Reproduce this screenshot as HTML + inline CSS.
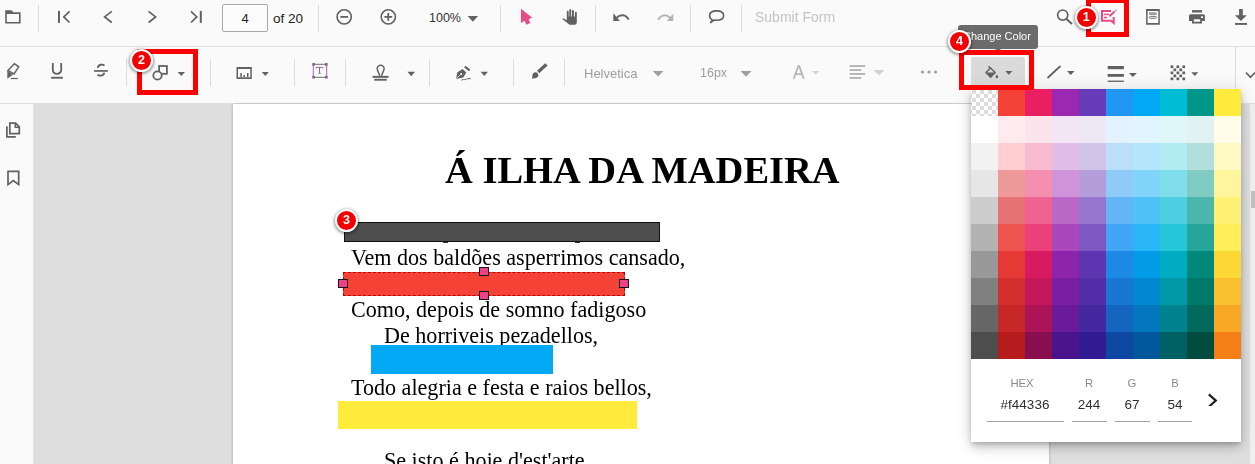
<!DOCTYPE html>
<html><head><meta charset="utf-8">
<style>
*{margin:0;padding:0;box-sizing:border-box}
html,body{width:1255px;height:464px;overflow:hidden;background:#dedede;font-family:"Liberation Sans",sans-serif}
.abs{position:absolute}
#tb1{left:0;top:0;width:1255px;height:47px;background:#fafafa;border-bottom:1px solid #e0e0e0}
#tb2{left:0;top:47px;width:1255px;height:57px;background:#fafafa;border-bottom:1px solid #e0e0e0}
.sep{position:absolute;width:1px;background:#dcdcdc}
#tb1 .sep{top:5px;height:27px}
#tb2 .sep{top:12px;height:27px}
.txt{position:absolute;white-space:pre;line-height:1}
#side{left:0;top:104px;width:34px;height:360px;background:#fafafa;border-right:1px solid #e0e0e0}
#page{left:233px;top:104px;width:816px;height:400px;background:#fff;box-shadow:-1px 0 2px rgba(0,0,0,0.15), 1px 0 2px rgba(0,0,0,0.15)}
.ser{font-family:"Liberation Serif",serif;color:#000;position:absolute;white-space:pre;line-height:1;will-change:transform}
.rbox{position:absolute;border:5px solid #fe0000}
.badge{position:absolute;width:23px;height:23px;border-radius:50%;background:#f50000;border:2.6px solid #fff;box-shadow:0 1px 3px 1px rgba(0,0,0,0.4);color:#fff;font-weight:700;font-size:12.5px;text-align:center;line-height:19.5px}
.handle{position:absolute;width:9.5px;height:9px;background:#ef4189;border:1.4px solid #151515}
#pop{left:971px;top:89px;width:270px;height:353px;background:#fff;box-shadow:0 3px 5px -1px rgba(0,0,0,.2),0 6px 10px 0 rgba(0,0,0,.14),0 1px 18px 0 rgba(0,0,0,.12)}
.lbl{will-change:transform;position:absolute;font-size:11.3px;color:#8a8a8a;line-height:1;white-space:pre;text-align:center}
.val{will-change:transform;position:absolute;font-size:13.5px;color:#2e2e2e;line-height:1;white-space:pre;text-align:center}
.ul{position:absolute;height:1px;background:#9e9e9e}
</style></head><body>

<div id="tb1" class="abs">
  <div class="sep" style="left:38px"></div>
  <div class="sep" style="left:318px"></div>
  <div class="sep" style="left:500px"></div>
  <div class="sep" style="left:595px"></div>
  <div class="sep" style="left:690px"></div>
  <div class="sep" style="left:741px"></div>
  <div class="abs" style="left:222px;top:4px;width:46px;height:28px;border:1px solid #a8a8a8;border-radius:2px;background:#fcfcfc"></div>
  <div class="txt" style="left:241.5px;top:12px;font-size:13px;color:#222">4</div>
  <div class="txt" style="left:273px;top:12px;font-size:13.5px;color:#222">of 20</div>
  <div class="txt" style="left:429px;top:12px;font-size:12.5px;color:#333">100%</div>
  <div class="txt" style="will-change:transform;left:755px;top:10px;font-size:14px;color:#c4c4c4">Submit Form</div>
</div>

<div id="tb2" class="abs">
  <div class="sep" style="left:126px"></div>
  <div class="sep" style="left:210px"></div>
  <div class="sep" style="left:294px"></div>
  <div class="sep" style="left:345px"></div>
  <div class="sep" style="left:429px"></div>
  <div class="sep" style="left:513px"></div>
  <div class="sep" style="left:564px"></div>
  <div class="sep" style="left:1235px;top:0;height:56px"></div>
  <div class="txt" style="will-change:transform;left:584px;top:20px;font-size:13px;color:#9e9e9e">Helvetica</div>
  <div class="txt" style="will-change:transform;left:700px;top:20px;font-size:12.5px;color:#9e9e9e">16px</div>
  <div class="abs" style="left:971px;top:10px;width:54px;height:38px;background:#dadada;border-radius:2px"></div>
</div>

<svg class="abs" style="left:0;top:0" width="1255" height="104" viewBox="0 0 1255 104">
 <g fill="#616161">
  <!-- folder -->
  <path fill-rule="evenodd" d="M5.2,10.2H11.4L13.4,12.2H20.6V23.6H5.2Z M6.8,14V22H19V14Z"/>
  <rect x="58" y="10.9" width="2" height="12"/>
  <rect x="199.8" y="10.9" width="2" height="12"/>
  <!-- zoom carets -->
  <path d="M467.7,16H478L472.85,21.7Z"/>
  <!-- pointer -->
  <path fill="#e94b86" d="M521,8.8L532,17.4L528.7,19.3L530.3,23L526.3,24.8L524.6,20.8L521,22.9Z"/>
  <!-- hand -->
  <path d="M566.8,11.8a0.95,0.95 0 0 1 1.9,0V16.5H569.3V10a0.95,0.95 0 0 1 1.9,0V16.5H572V10.9a0.95,0.95 0 0 1 1.9,0V16.5H574.9V12.8a0.95,0.95 0 0 1 1.9,0V22.5a2.3,2.3 0 0 1 -2.3,2.3H569.5L562.3,18.9L563.3,18.2L566.8,20.2Z"/>
  <!-- undo -->
  <path d="M613.3,13.3V21H619.8Z"/>
  <path fill="#b5b5b5" d="M673.3,13.5V21.1H666.8Z"/>
  <!-- download -->
  <path d="M1239.1,9H1242.8V15.2H1246.8L1240.95,20.9L1235,15.2H1239.1Z"/>
  <rect x="1235" y="23" width="12" height="1.9"/>
  <!-- print -->
  <rect x="1192" y="10.1" width="10" height="2.4"/>
  <path fill-rule="evenodd" d="M1190.5,14.2H1203.4A1.5,1.5 0 0 1 1204.9,15.7V20.9H1202V23.6H1192V20.9H1189V15.7A1.5,1.5 0 0 1 1190.5,14.2Z M1193.8,19.3V21.7H1200.2V19.3Z M1201.1,16.2V18.1H1203V16.2Z"/>
  <!-- organizer -->
  <path fill-rule="evenodd" d="M1146.1,9H1159.8V24.7H1146.1Z M1147.6,11V23H1158.3V11Z"/>
  <rect x="1149" y="12.3" width="7.8" height="2.7" rx="1" fill="#9a9a9a"/>
 </g>
 <g fill="none" stroke="#616161" stroke-width="1.7">
  <polyline points="69.5,11.3 63.8,16.9 69.5,22.5"/>
  <polyline points="111.8,11.3 104.6,16.9 111.8,22.5"/>
  <polyline points="148.6,11.3 155.6,16.9 148.6,22.5"/>
  <polyline points="191,11.3 196.8,16.9 191,22.5"/>
  <circle cx="344.2" cy="16.9" r="7.1" stroke-width="1.6"/>
  <line x1="340.3" y1="16.9" x2="348.1" y2="16.9" stroke-width="1.8"/>
  <circle cx="388.3" cy="16.9" r="7.1" stroke-width="1.6"/>
  <line x1="384.4" y1="16.9" x2="392.2" y2="16.9" stroke-width="1.8"/>
  <line x1="388.3" y1="13" x2="388.3" y2="20.8" stroke-width="1.8"/>
  <path d="M616.8,17.6C619.8,14.3 625.8,13.8 628.6,19.6" stroke-width="2"/>
  <path d="M670,17.8C667,14.5 661,14 658.2,19.8" stroke-width="2" stroke="#b5b5b5"/>
  <path d="M712.3,19.9C710.3,18.9 709.6,17.3 709.6,15.6C709.6,12.6 712.7,10.9 716.6,10.9C720.5,10.9 723.6,12.6 723.6,15.6C723.6,18.6 720.5,20.3 716.6,20.3C715.6,20.3 714.9,20.2 714,20.1L710.6,22.6Z" stroke-width="1.6" stroke-linejoin="round"/>
  <circle cx="1062.7" cy="15.1" r="5.1" stroke-width="1.7"/>
  <line x1="1066.4" y1="18.9" x2="1072" y2="23.9" stroke-width="2"/>
  <rect x="1149.5" y="16.4" width="6.9" height="1.9" rx="0.9" stroke-width="0.9"/>
  <!-- form designer -->
  <g stroke="#e94b86" stroke-width="2">
   <path d="M1111,11H1102V20.8H1111.3L1113.7,23V17.1"/>
   <line x1="1104" y1="14.4" x2="1109" y2="14.4" stroke-width="1.5"/>
   <line x1="1104" y1="17.5" x2="1107" y2="17.5" stroke-width="1.5"/>
   <line x1="1109.5" y1="16.3" x2="1114.6" y2="11.6"/>
   <line x1="1115.3" y1="10.9" x2="1116.3" y2="10" stroke-width="1.5"/>
  </g>
 </g>

 <!-- toolbar 2 -->
 <g fill="#616161">
  <!-- highlight -->
  <path d="M7.3,70.7V78.7L13,74.6Z"/>
  <rect x="10.8" y="77.9" width="7" height="1.2"/>
  <rect x="51.1" y="76.8" width="11.8" height="1.9"/>
  <rect x="94.1" y="70.1" width="13.7" height="1.7"/>
  <path d="M177.7,72.1H185L181.35,75.9Z"/>
  <path d="M261.8,72.1H268.8L265.3,75.9Z"/>
  <path d="M407.4,71.7H415L411.2,76.2Z"/>
  <path d="M480.5,71.7H488L484.25,75.9Z"/>
  <!-- measure -->
  <path fill-rule="evenodd" d="M236.5,67H251.8V78.9H236.5Z M238,69.1V77.3H250.3V69.1Z"/>
  <rect x="240.3" y="73" width="1.5" height="4"/>
  <rect x="243.4" y="75" width="1.5" height="2"/>
  <rect x="247" y="73" width="1.5" height="4"/>
  <!-- free text corners -->
  <rect x="312.3" y="63.1" width="2.6" height="2.6"/>
  <rect x="325" y="63.1" width="2.6" height="2.6"/>
  <rect x="312.3" y="75.9" width="2.6" height="2.6"/>
  <rect x="325" y="75.9" width="2.6" height="2.6"/>
  <!-- stamp -->
  <rect x="372.5" y="75.9" width="16.1" height="1.9"/>
  <rect x="374.3" y="78.8" width="12.4" height="1.9"/>
  <!-- signature nib -->
  <path d="M456,78.9L457.4,72.2L462.6,68.9L466.3,72.4L463.3,77.4Z"/>
  <!-- ink -->
  <path d="M537,70.8L545.2,63.3L547.6,65.6L539.3,73.2Z"/>
  <path d="M535.3,72.2C537.3,72.2 538.6,73.6 538.4,75.4C538.1,77.6 535.5,78.6 531.8,78.4C532.6,77.5 532.1,76 532.7,74.3C533.1,73 534.1,72.2 535.3,72.2Z"/>
  <!-- bucket -->
  <path d="M985.9,72.6H995.2L990.55,77.3Z"/>
  <path d="M996.9,74.6C997.5,75.5 998.2,76.2 998.2,76.9A1.3,1.3 0 0 1 995.6,76.9C995.6,76.2 996.3,75.5 996.9,74.6Z"/>
  <path d="M1005.2,70.9H1012.5L1008.85,74.7Z"/>
  <!-- line caret, stroke, opacity -->
  <path d="M1067,71H1074.5L1070.75,75Z"/>
  <rect x="1107.7" y="66" width="16.2" height="3.2"/>
  <rect x="1107.7" y="74" width="16.2" height="2.8"/>
  <rect x="1107.7" y="80.6" width="16.2" height="1.3"/>
  <path d="M1128.9,72.9H1136.9L1132.9,77Z"/>
  <path d="M1191.3,72.3H1198.3L1194.8,75.9Z"/>
 </g>
 <g fill="#616161">
  <rect x="1170.6" y="65.4" width="2.7" height="2.7"/><rect x="1176.5" y="65.4" width="2.7" height="2.7"/><rect x="1182.4" y="65.4" width="2.7" height="2.7"/>
  <rect x="1173.5" y="68.5" width="2.7" height="2.7"/><rect x="1179.4" y="68.5" width="2.7" height="2.7"/>
  <rect x="1170.6" y="71.5" width="2.7" height="2.7"/><rect x="1176.5" y="71.5" width="2.7" height="2.7"/><rect x="1182.4" y="71.5" width="2.7" height="2.7"/>
  <rect x="1173.5" y="74.5" width="2.7" height="2.7"/><rect x="1179.4" y="74.5" width="2.7" height="2.7"/>
  <rect x="1170.6" y="77.5" width="2.7" height="2.7"/><rect x="1176.5" y="77.5" width="2.7" height="2.7"/><rect x="1182.4" y="77.5" width="2.7" height="2.7"/>
 </g>
 <g fill="none" stroke="#616161" stroke-width="1.6">
  <path d="M8,70.6L14.4,63.7L18.7,66.8L14,74Z" stroke-width="1.5"/>
  <path d="M52.8,63.1V70.5A4.3,4.3 0 0 0 61.2,70.5V63.1" stroke-width="1.8"/>
  <path d="M104.4,65.6C103,64 98.3,64.2 97.7,67.8" stroke-width="1.8"/>
  <path d="M97.5,74.7C99,76.3 103.8,76.2 104.2,72.6" stroke-width="1.8"/>
  <rect x="159.1" y="66" width="7.8" height="7.8" stroke-width="1.8"/>
  <circle cx="157.5" cy="75.5" r="4.2" stroke-width="1.8" fill="#fafafa"/>
  <line x1="313" y1="64.3" x2="327" y2="64.3" stroke-width="1" stroke="#707070"/><line x1="313" y1="77.3" x2="327" y2="77.3" stroke-width="1" stroke="#707070"/><line x1="313.3" y1="64" x2="313.3" y2="78" stroke-width="1" stroke="#a565b5"/><line x1="326.7" y1="64" x2="326.7" y2="78" stroke-width="1" stroke="#a565b5"/>
  <line x1="316" y1="67.4" x2="322.8" y2="67.4" stroke-width="1" stroke="#8a6a90"/>
  <line x1="319.5" y1="67.4" x2="319.5" y2="73.4" stroke-width="1" stroke="#9a5aa8"/><line x1="317.9" y1="73.4" x2="321.1" y2="73.4" stroke-width="0.8" stroke="#8a8a9a"/><line x1="316" y1="67.4" x2="316" y2="68.6" stroke-width="0.8" stroke="#8a6a90"/><line x1="323" y1="67.4" x2="323" y2="68.6" stroke-width="0.8" stroke="#8a6a90"/>
  <path d="M379.7,75.9C379.4,73 377.2,71 377.2,68.8A3.45,3.45 0 0 1 384.1,68.8C384.1,71 381.9,73 381.6,75.9" stroke-width="1.5"/>
  <line x1="464.8" y1="66.6" x2="469.6" y2="70.4" stroke-width="2"/>
  <path d="M461.3,80.2C463,79 464,80 465.5,79.5C467,79 468,78.2 470.7,78.8" stroke-width="1"/>
  <line x1="1047.5" y1="78" x2="1060.5" y2="66" stroke-width="1.8"/>
  <path d="M990.55,68L986,72.6L990.55,77.2L995.1,72.6Z" stroke-width="1.4"/>
  <line x1="988.4" y1="66.2" x2="990.3" y2="68.1" stroke-width="1.4"/>
  <polyline points="1246,72.6 1250.5,77.3 1255,72.6" stroke-width="1.6"/>
 </g>
 <circle cx="461.2" cy="73.9" r="1" fill="#fafafa"/><line x1="456.4" y1="78.5" x2="460.6" y2="74.5" stroke="#fafafa" stroke-width="0.7"/>
 <!-- A glyph -->
 <path fill="#b5b5b5" d="M797.8,65H799.7L804.7,78.8H802.8L801.4,74.9H796.1L794.7,78.8H792.8Z M796.7,73.3H800.8L798.75,67.5Z"/>
 <path fill="#d0d0d0" d="M812,70.9H819.3L815.65,74.4Z"/>
 <g fill="#acacac">
  <rect x="849.6" y="65.2" width="15.6" height="1.7"/>
  <rect x="849.6" y="69.2" width="11.6" height="1.7"/>
  <rect x="849.6" y="73.1" width="15.6" height="1.7"/>
  <rect x="849.6" y="77.1" width="11.6" height="1.7"/>
 </g>
 <path fill="#d0d0d0" d="M873.6,70H884.4L879,75.3Z"/>
 <path fill="#9e9e9e" d="M652.7,70.9H663.5L658.1,76.5Z"/>
 <path fill="#9e9e9e" d="M740.5,70.9H751.5L746,76.7Z"/>
 <g fill="#9e9e9e"><circle cx="922.5" cy="72" r="1.6"/><circle cx="929" cy="72" r="1.6"/><circle cx="935.5" cy="72" r="1.6"/></g>
</svg>

<div id="side" class="abs"></div>
<svg class="abs" style="left:0;top:104px" width="33" height="100" viewBox="0 104 33 100">
 <g fill="none" stroke="#616161" stroke-width="1.5">
  <path d="M6.9,126.3V136.8H15.8" stroke-width="1.7"/>
  <path d="M9.8,123.1H15.6L19.3,126.8V133.6H9.8Z" stroke-width="1.7"/>
  <path d="M15.3,123.3V127.2H19.1" stroke-width="1.5"/>
  <path d="M8,171.4H18.7V184.6L13.35,180.6L8,184.6Z" stroke-width="1.7"/>
 </g>
</svg>
<div id="page" class="abs"></div>

<div class="abs" style="left:1250px;top:104px;width:5px;height:360px;background:#f0f0f0"></div>
<div class="abs" style="left:1251px;top:191px;width:4px;height:17px;background:#c1c1c1"></div>

<div class="ser" style="left:445px;top:150.5px;font-size:38.5px;font-weight:700">Á ILHA DA MADEIRA</div>
<div class="ser" style="left:351px;top:247px;font-size:22.1px">Vem dos baldões asperrimos cansado,</div>
<div class="ser" style="left:351px;top:299px;font-size:22.1px">Como, depois de somno fadigoso</div>
<div class="ser" style="left:384px;top:325px;font-size:22.1px">De horriveis pezadellos,</div>
<div class="ser" style="left:351px;top:377px;font-size:22.1px">Todo alegria e festa e raios bellos,</div>
<div class="ser" style="left:384px;top:450px;font-size:22.1px">Se isto é hoje d'est'arte</div>

<div class="abs" style="left:344px;top:222px;width:316px;height:20px;background:#4d4d4d;border:1px solid #111"></div>
<div class="abs" style="left:343px;top:272px;width:282px;height:24px;background:#f44336;border:1px dashed #b00"></div>
<div class="handle" style="left:338px;top:279px"></div>
<div class="handle" style="left:619.2px;top:279px"></div>
<div class="handle" style="left:479px;top:267px"></div>
<div class="handle" style="left:479px;top:291px"></div>
<div class="abs" style="left:443px;top:242px;width:5px;height:1.2px;background:#333"></div>
<div class="abs" style="left:575px;top:242px;width:5px;height:1.2px;background:#333"></div>
<div class="abs" style="left:371px;top:345px;width:182px;height:29px;background:#03a9f4"></div>
<div class="abs" style="left:338px;top:401px;width:299px;height:28px;background:#ffeb3b"></div>

<div id="pop" class="abs">
 <svg class="abs" style="left:0;top:0" width="270" height="270" viewBox="0 0 270 270">
  <defs><pattern id="chk" x="1" y="1" width="8" height="8" patternUnits="userSpaceOnUse"><rect width="8" height="8" fill="#fff"/><rect x="0" y="0" width="4" height="4" fill="#dcdcdc"/><rect x="4" y="4" width="4" height="4" fill="#dcdcdc"/></pattern></defs>
<rect x="0" y="0" width="27" height="27" fill="url(#chk)"/>
<rect x="27" y="0" width="27" height="27" fill="#f44336"/>
<rect x="54" y="0" width="27" height="27" fill="#e91e63"/>
<rect x="81" y="0" width="27" height="27" fill="#9c27b0"/>
<rect x="108" y="0" width="27" height="27" fill="#673ab7"/>
<rect x="135" y="0" width="27" height="27" fill="#2196f3"/>
<rect x="162" y="0" width="27" height="27" fill="#03a9f4"/>
<rect x="189" y="0" width="27" height="27" fill="#00bcd4"/>
<rect x="216" y="0" width="27" height="27" fill="#009688"/>
<rect x="243" y="0" width="27" height="27" fill="#ffeb3b"/>
<rect x="0" y="27" width="27" height="27" fill="#ffffff"/>
<rect x="27" y="27" width="27" height="27" fill="#ffebee"/>
<rect x="54" y="27" width="27" height="27" fill="#fce4ec"/>
<rect x="81" y="27" width="27" height="27" fill="#f3e5f5"/>
<rect x="108" y="27" width="27" height="27" fill="#ede7f6"/>
<rect x="135" y="27" width="27" height="27" fill="#e3f2fd"/>
<rect x="162" y="27" width="27" height="27" fill="#e1f5fe"/>
<rect x="189" y="27" width="27" height="27" fill="#e0f7fa"/>
<rect x="216" y="27" width="27" height="27" fill="#e0f2f1"/>
<rect x="243" y="27" width="27" height="27" fill="#fffde7"/>
<rect x="0" y="54" width="27" height="27" fill="#f2f2f2"/>
<rect x="27" y="54" width="27" height="27" fill="#ffcdd2"/>
<rect x="54" y="54" width="27" height="27" fill="#f8bbd0"/>
<rect x="81" y="54" width="27" height="27" fill="#e1bee7"/>
<rect x="108" y="54" width="27" height="27" fill="#d1c4e9"/>
<rect x="135" y="54" width="27" height="27" fill="#bbdefb"/>
<rect x="162" y="54" width="27" height="27" fill="#b3e5fc"/>
<rect x="189" y="54" width="27" height="27" fill="#b2ebf2"/>
<rect x="216" y="54" width="27" height="27" fill="#b2dfdb"/>
<rect x="243" y="54" width="27" height="27" fill="#fff9c4"/>
<rect x="0" y="81" width="27" height="27" fill="#e6e6e6"/>
<rect x="27" y="81" width="27" height="27" fill="#ef9a9a"/>
<rect x="54" y="81" width="27" height="27" fill="#f48fb1"/>
<rect x="81" y="81" width="27" height="27" fill="#ce93d8"/>
<rect x="108" y="81" width="27" height="27" fill="#b39ddb"/>
<rect x="135" y="81" width="27" height="27" fill="#90caf9"/>
<rect x="162" y="81" width="27" height="27" fill="#81d4fa"/>
<rect x="189" y="81" width="27" height="27" fill="#80deea"/>
<rect x="216" y="81" width="27" height="27" fill="#80cbc4"/>
<rect x="243" y="81" width="27" height="27" fill="#fff59d"/>
<rect x="0" y="108" width="27" height="27" fill="#cccccc"/>
<rect x="27" y="108" width="27" height="27" fill="#e57373"/>
<rect x="54" y="108" width="27" height="27" fill="#f06292"/>
<rect x="81" y="108" width="27" height="27" fill="#ba68c8"/>
<rect x="108" y="108" width="27" height="27" fill="#9575cd"/>
<rect x="135" y="108" width="27" height="27" fill="#64b5f6"/>
<rect x="162" y="108" width="27" height="27" fill="#4fc3f7"/>
<rect x="189" y="108" width="27" height="27" fill="#4dd0e1"/>
<rect x="216" y="108" width="27" height="27" fill="#4db6ac"/>
<rect x="243" y="108" width="27" height="27" fill="#fff176"/>
<rect x="0" y="135" width="27" height="27" fill="#b3b3b3"/>
<rect x="27" y="135" width="27" height="27" fill="#ef5350"/>
<rect x="54" y="135" width="27" height="27" fill="#ec407a"/>
<rect x="81" y="135" width="27" height="27" fill="#ab47bc"/>
<rect x="108" y="135" width="27" height="27" fill="#7e57c2"/>
<rect x="135" y="135" width="27" height="27" fill="#42a5f5"/>
<rect x="162" y="135" width="27" height="27" fill="#29b6f6"/>
<rect x="189" y="135" width="27" height="27" fill="#26c6da"/>
<rect x="216" y="135" width="27" height="27" fill="#26a69a"/>
<rect x="243" y="135" width="27" height="27" fill="#ffee58"/>
<rect x="0" y="162" width="27" height="27" fill="#999999"/>
<rect x="27" y="162" width="27" height="27" fill="#e53935"/>
<rect x="54" y="162" width="27" height="27" fill="#d81b60"/>
<rect x="81" y="162" width="27" height="27" fill="#8e24aa"/>
<rect x="108" y="162" width="27" height="27" fill="#5e35b1"/>
<rect x="135" y="162" width="27" height="27" fill="#1e88e5"/>
<rect x="162" y="162" width="27" height="27" fill="#039be5"/>
<rect x="189" y="162" width="27" height="27" fill="#00acc1"/>
<rect x="216" y="162" width="27" height="27" fill="#00897b"/>
<rect x="243" y="162" width="27" height="27" fill="#fdd835"/>
<rect x="0" y="189" width="27" height="27" fill="#808080"/>
<rect x="27" y="189" width="27" height="27" fill="#d32f2f"/>
<rect x="54" y="189" width="27" height="27" fill="#c2185b"/>
<rect x="81" y="189" width="27" height="27" fill="#7b1fa2"/>
<rect x="108" y="189" width="27" height="27" fill="#512da8"/>
<rect x="135" y="189" width="27" height="27" fill="#1976d2"/>
<rect x="162" y="189" width="27" height="27" fill="#0288d1"/>
<rect x="189" y="189" width="27" height="27" fill="#0097a7"/>
<rect x="216" y="189" width="27" height="27" fill="#00796b"/>
<rect x="243" y="189" width="27" height="27" fill="#fbc02d"/>
<rect x="0" y="216" width="27" height="27" fill="#666666"/>
<rect x="27" y="216" width="27" height="27" fill="#c62828"/>
<rect x="54" y="216" width="27" height="27" fill="#ad1457"/>
<rect x="81" y="216" width="27" height="27" fill="#6a1b9a"/>
<rect x="108" y="216" width="27" height="27" fill="#4527a0"/>
<rect x="135" y="216" width="27" height="27" fill="#1565c0"/>
<rect x="162" y="216" width="27" height="27" fill="#0277bd"/>
<rect x="189" y="216" width="27" height="27" fill="#00838f"/>
<rect x="216" y="216" width="27" height="27" fill="#00695c"/>
<rect x="243" y="216" width="27" height="27" fill="#f9a825"/>
<rect x="0" y="243" width="27" height="27" fill="#4d4d4d"/>
<rect x="27" y="243" width="27" height="27" fill="#b71c1c"/>
<rect x="54" y="243" width="27" height="27" fill="#880e4f"/>
<rect x="81" y="243" width="27" height="27" fill="#4a148c"/>
<rect x="108" y="243" width="27" height="27" fill="#311b92"/>
<rect x="135" y="243" width="27" height="27" fill="#0d47a1"/>
<rect x="162" y="243" width="27" height="27" fill="#01579b"/>
<rect x="189" y="243" width="27" height="27" fill="#006064"/>
<rect x="216" y="243" width="27" height="27" fill="#004d40"/>
<rect x="243" y="243" width="27" height="27" fill="#f57f17"/>
 </svg>
 <div class="lbl" style="left:31px;top:289px;width:40px">HEX</div>
 <div class="val" style="left:16px;top:309px;width:76px">#f44336</div>
 <div class="ul" style="left:16px;top:332px;width:77px"></div>
 <div class="lbl" style="left:101px;top:289px;width:34px">R</div>
 <div class="val" style="left:101px;top:309px;width:34px">244</div>
 <div class="ul" style="left:101px;top:332px;width:35px"></div>
 <div class="lbl" style="left:144px;top:289px;width:34px">G</div>
 <div class="val" style="left:144px;top:309px;width:34px">67</div>
 <div class="ul" style="left:144px;top:332px;width:35px"></div>
 <div class="lbl" style="left:187px;top:289px;width:34px">B</div>
 <div class="val" style="left:187px;top:309px;width:34px">54</div>
 <div class="ul" style="left:187px;top:332px;width:34px"></div>
 <svg class="abs" style="left:230px;top:297px" width="20" height="20" viewBox="0 0 20 20"><polyline points="7.8,8.4 14.8,14.6 7.8,20.8" fill="none" stroke="#212121" stroke-width="2.2"/></svg>
</div>

<!-- tooltip -->
<div class="abs" style="left:958px;top:25px;width:80px;height:24px;background:#6b6b6b;border-radius:3px"></div>
<div class="abs" style="left:993px;top:48px;width:0;height:0;border-left:5px solid transparent;border-right:5px solid transparent;border-top:3px solid #6b6b6b"></div>
<div class="txt" style="left:963px;top:31px;font-size:11px;color:#fff">Change Color</div>

<div class="rbox" style="left:1086px;top:-2px;width:43px;height:39px"></div>
<div class="rbox" style="left:137px;top:49px;width:61px;height:46px"></div>
<div class="rbox" style="left:959px;top:50px;width:75px;height:40px"></div>

<div class="badge" style="left:1074.8px;top:5.6px">1</div>
<div class="badge" style="left:130px;top:48.9px">2</div>
<div class="badge" style="left:335px;top:209.1px">3</div>
<div class="badge" style="left:947.9px;top:30.2px">4</div>

</body></html>
